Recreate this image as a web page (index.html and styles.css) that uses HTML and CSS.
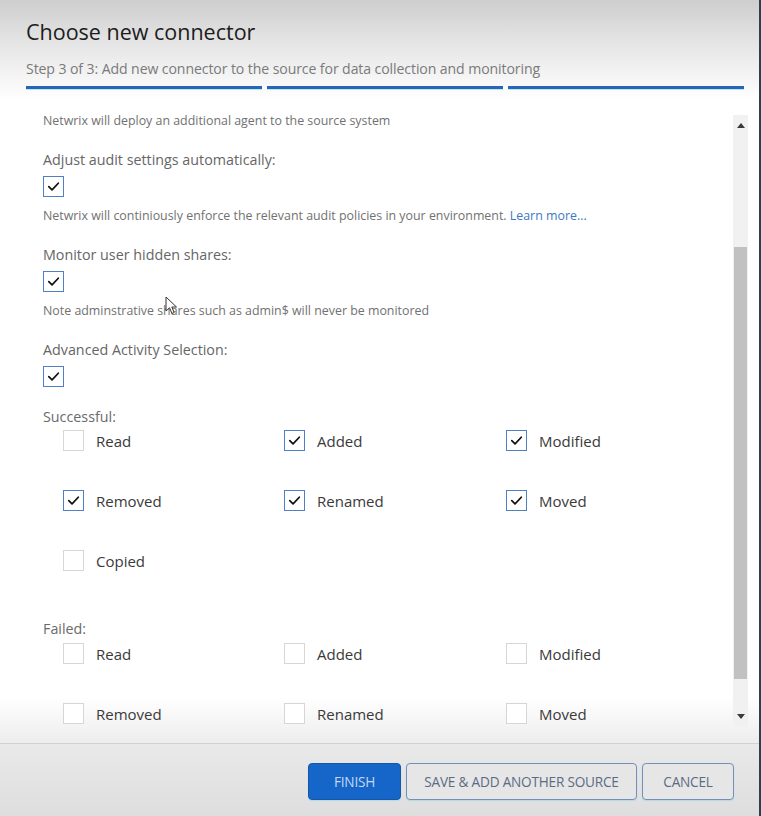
FILE: index.html
```html
<!DOCTYPE html>
<html lang="en">
<head>
<meta charset="utf-8">
<title>Choose new connector</title>
<link rel="stylesheet" href="styles.css">
</head>
<body>
<div class="dialog">
  <header class="header">
    <h1 class="title">Choose new connector</h1>
    <div class="subtitle">Step 3 of 3: Add new connector to the source for data collection and monitoring</div>
    <div class="steps"><span class="step"></span><span class="step"></span><span class="step"></span></div>
  </header>

  <main class="body">
    <div class="content">
      <p class="desc first">Netwrix will deploy an additional agent to the source system</p>

      <div class="field-label">Adjust audit settings automatically:</div>
      <span class="cb checked"><svg viewBox="0 0 21 21"><path d="M5.3 10.6 L8.9 14.2 L15.8 6.9"/></svg></span>
      <p class="desc">Netwrix will continiously enforce the relevant audit policies in your environment. <a class="link">Learn more...</a></p>

      <div class="field-label">Monitor user hidden shares:</div>
      <span class="cb checked"><svg viewBox="0 0 21 21"><path d="M5.3 10.6 L8.9 14.2 L15.8 6.9"/></svg></span>
      <p class="desc">Note adminstrative shares such as admin$ will never be monitored</p>

      <div class="field-label">Advanced Activity Selection:</div>
      <span class="cb checked"><svg viewBox="0 0 21 21"><path d="M5.3 10.6 L8.9 14.2 L15.8 6.9"/></svg></span>

      <div class="group-label">Successful:</div>
      <div class="options">
        <label class="opt"><span class="cb"></span>Read</label>
        <label class="opt"><span class="cb checked"><svg viewBox="0 0 21 21"><path d="M5.3 10.6 L8.9 14.2 L15.8 6.9"/></svg></span>Added</label>
        <label class="opt"><span class="cb checked"><svg viewBox="0 0 21 21"><path d="M5.3 10.6 L8.9 14.2 L15.8 6.9"/></svg></span>Modified</label>
        <label class="opt"><span class="cb checked"><svg viewBox="0 0 21 21"><path d="M5.3 10.6 L8.9 14.2 L15.8 6.9"/></svg></span>Removed</label>
        <label class="opt"><span class="cb checked"><svg viewBox="0 0 21 21"><path d="M5.3 10.6 L8.9 14.2 L15.8 6.9"/></svg></span>Renamed</label>
        <label class="opt"><span class="cb checked"><svg viewBox="0 0 21 21"><path d="M5.3 10.6 L8.9 14.2 L15.8 6.9"/></svg></span>Moved</label>
        <label class="opt"><span class="cb"></span>Copied</label>
      </div>

      <div class="group-label failed">Failed:</div>
      <div class="options">
        <label class="opt"><span class="cb"></span>Read</label>
        <label class="opt"><span class="cb"></span>Added</label>
        <label class="opt"><span class="cb"></span>Modified</label>
        <label class="opt"><span class="cb"></span>Removed</label>
        <label class="opt"><span class="cb"></span>Renamed</label>
        <label class="opt"><span class="cb"></span>Moved</label>
      </div>
    </div>

    <div class="scrollbar">
      <span class="arrow up"></span>
      <div class="track"><div class="thumb"></div></div>
      <span class="arrow down"></span>
    </div>

    <svg class="cursor" viewBox="0 0 13 20" width="13" height="20">
      <path d="M1 1 L1 15 L4.5 11.8 L7 17.5 L9.2 16.5 L6.8 11 L11.5 11 Z" fill="#fff" stroke="#333" stroke-width="1" stroke-linejoin="round"/>
    </svg>
  </main>

  <footer class="footer">
    <button class="btn primary">FINISH</button>
    <button class="btn">SAVE &amp; ADD ANOTHER SOURCE</button>
    <button class="btn">CANCEL</button>
  </footer>
</div>
</body>
</html>
```

FILE: styles.css
```css
* { box-sizing: border-box; }

html, body {
  margin: 0;
  padding: 0;
  background: #ffffff;
}

body {
  font-family: "Open Sans", "Noto Sans", "DejaVu Sans", sans-serif;
  width: 761px;
  height: 816px;
  overflow: hidden;
}

.dialog {
  width: 761px;
  height: 816px;
  display: flex;
  flex-direction: column;
  border-right: 2px solid #26434f;
  background: #ffffff;
}

.header {
  padding: 18px 15px 11px 26px;
  background: linear-gradient(to bottom, #cecece 0%, #e6e6e6 45%, #ffffff 100%);
}

.title {
  margin: 0;
  font-size: 21.5px;
  line-height: 28px;
  font-weight: 400;
  color: #1c1c1c;
}

.subtitle {
  margin-top: 13px;
  font-size: 14.1px;
  line-height: 20px;
  color: #7a7a7a;
  letter-spacing: -0.1px;
}

.steps {
  margin-top: 7px;
  display: flex;
  gap: 5px;
}

.step {
  flex: 1;
  height: 3px;
  background: #2566b8;
  box-shadow: 0 1px 0 #bfe3f3;
}

.body {
  flex: 1;
  position: relative;
  display: flex;
  overflow: hidden;
  background: linear-gradient(to bottom, #ffffff 0%, #ffffff calc(100% - 46px), #ededed 100%);
}

.content {
  flex: 1;
  padding: 12px 0 0 43px;
}

.desc {
  margin: 0;
  font-size: 12.4px;
  line-height: 18px;
  color: #717171;
}

.link {
  color: #3b78c2;
}

.field-label {
  margin-top: 20px;
  font-size: 14.3px;
  line-height: 20px;
  color: #666;
}

.field-label + .cb {
  margin-top: 6px;
}

.cb + .desc {
  margin-top: 10px;
}

.cb {
  display: block;
  width: 21px;
  height: 21px;
  border: 1px solid #d6d6d6;
  background: #fff;
  flex: none;
}

.cb.checked {
  border-color: #4f80c4;
}

.cb svg {
  display: block;
  width: 19px;
  height: 19px;
  fill: none;
  stroke: #111;
  stroke-width: 1.9;
  stroke-linecap: round;
  stroke-linejoin: round;
}

.group-label {
  margin-top: 20px;
  font-size: 14.3px;
  line-height: 20px;
  color: #6a6a6a;
}

.group-label.failed {
  margin-top: 48px;
}

.options {
  margin-top: 3px;
  margin-left: 20px;
  display: grid;
  grid-template-columns: 221px 222px 180px;
  row-gap: 39px;
}

.failed + .options {
  margin-top: 4px;
}

.opt {
  display: flex;
  align-items: center;
  gap: 12px;
  height: 21px;
  font-size: 15px;
  color: #3a3a3a;
}

.scrollbar {
  width: 15px;
  margin: 15px 11px 17px 0;
  background: #f1f1f1;
  display: flex;
  flex-direction: column;
  align-items: center;
}

.arrow {
  width: 0;
  height: 0;
  border-left: 4px solid transparent;
  border-right: 4px solid transparent;
  flex: none;
}

.arrow.up {
  margin-top: 8px;
  border-bottom: 5px solid #3a3a3a;
}

.arrow.down {
  margin-bottom: 7px;
  border-top: 5px solid #3a3a3a;
}

.track {
  flex: 1;
  width: 100%;
  display: flex;
  flex-direction: column;
  padding-top: 119px;
  padding-bottom: 35px;
}

.thumb {
  flex: 1;
  margin: 0 1px;
  background: #c1c1c1;
}

.cursor {
  position: absolute;
  left: 165px;
  top: 196px;
}

.footer {
  height: 73px;
  border-top: 1px solid #d2d2d2;
  background: linear-gradient(to bottom, #e9e9e9 0%, #dedede 100%);
  display: flex;
  justify-content: flex-end;
  align-items: flex-start;
  gap: 5px;
  padding: 19px 25px 0 0;
}

.btn {
  height: 37px;
  padding: 0 8px;
  white-space: nowrap;
  font-family: "Open Sans", "Noto Sans", sans-serif;
  font-size: 13.6px;
  letter-spacing: -0.2px;
  color: #5a6b84;
  background: #e6e6e6;
  border: 1px solid #7391b8;
  border-radius: 4px;
  box-shadow: 0 1px 1px rgba(120,200,230,0.35);
}

.btn.primary {
  width: 93px;
  background: #1666c9;
  border-color: #1357ab;
  color: #c5d9f2;
}

.btn:nth-child(2) { width: 231px; }
.btn:nth-child(3) { width: 92px; }
```
